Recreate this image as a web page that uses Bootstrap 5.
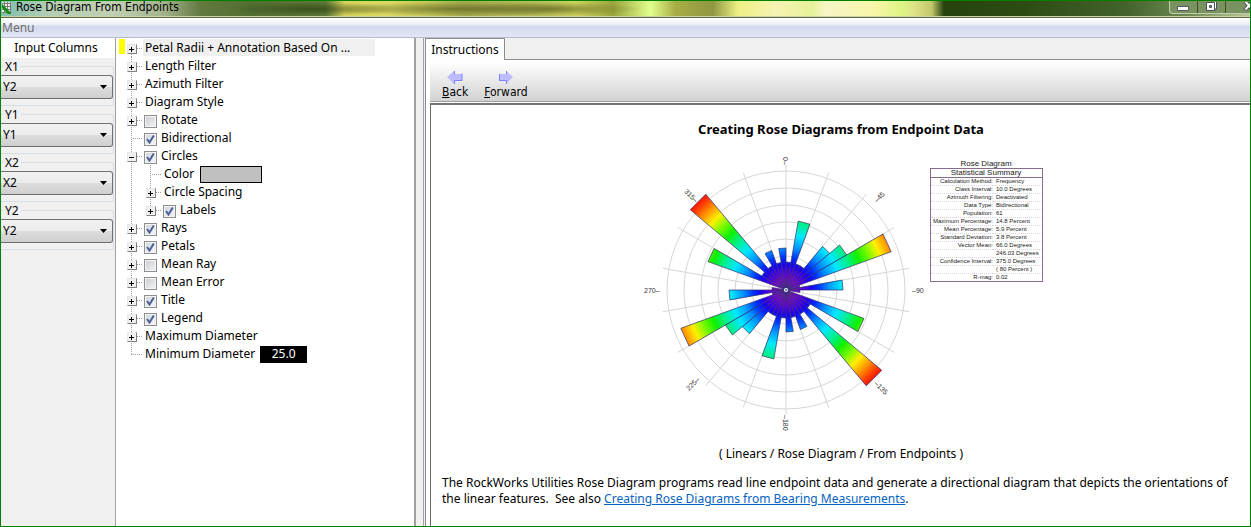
<!DOCTYPE html>
<html lang="en">
<head>
<meta charset="utf-8">
<meta name="viewport" content="width=device-width, initial-scale=1">
<title>Rose Diagram From Endpoints</title>
<link rel="stylesheet" href="https://cdn.jsdelivr.net/npm/bootstrap@5.3.0/dist/css/bootstrap.min.css">
<style>
  body { font-family: "Noto Sans", "DejaVu Sans Condensed", sans-serif; font-size: 12px; line-height: 16px; color: #000; background: #f0f0f0; }
  .app { border: 1px solid #008000; height: 100vh; }
  /* title bar */
  .titlebar { height: 17px; padding-left: 1px; border-bottom: 1px solid #5c6a45; box-shadow: inset 0 -1px 0 #c9d2a8;
    background:
      radial-gradient(closest-side, #5a601fb0, #5a601f00) 33% 60% / 260px 14px no-repeat,
      radial-gradient(closest-side, #5a601fa0, #5a601f00) 43% 60% / 180px 14px no-repeat,
      radial-gradient(closest-side, #22330c90, #22330c00) 21% 60% / 170px 14px no-repeat,
      linear-gradient(90deg, #7fbfae 0, #b5cdb4 4%, #c0cfb2 9%, #a3b48d 13%, #62793f 16%, #526f31 20%, #5d7a37 26%, #d6d25a 27.5%, #dcd963 31%, #c6c858 34%, #a5ab4c 37%, #b7bd58 43%, #cfd35e 46%, #9ba53c 49%, #e2ff8c 52%, #a7ad45 54%, #8f9742 57%, #eef084 59%, #f6f3b3 62%, #e6f29a 65%, #f7f5c6 66%, #f8f6a8 70%, #def587 72%, #dfe586 73%, #c3c76c 74.5%, #26430d 75.500%, #2d4c14 82%, #43632c 90%, #6d8a52 95%, #b9c795 100%); }
  .title-text { font-family: "DejaVu Sans Condensed", "DejaVu Sans", sans-serif; line-height: 13px; margin-left: 4px; }
  .winctl { height: 13px; border: 1px solid #c2cdb0; border-top: 0; border-right: 0; border-radius: 0 0 0 4px; background: #78935f; }
  .winctl button { border: 0; padding: 0; height: 12px; width: 28px; background: none; border-right: 1px solid #3c5128; line-height: 0; }
  .winctl .shut { width: 24px; border: 0; padding-left: 17px; }
  .winctl svg { display: block; margin: 0 auto; }
  .menubar { height: 20px; padding-left: 1px; line-height: 19px; border-bottom: 1px solid #b6bccc; background: linear-gradient(#fff 0, #e9eef7 7px, #d3daed 8px, #e1e6f5 100%); }
  .menubar a { color: #6d6d6d; text-decoration: none; }
  /* column pickers */
  .inputs { width: 115px; border-right: 1px solid #a0a0a0; }
  .inputs h2 { font-size: 12px; line-height: 16px; font-weight: 400; margin: 0; padding: 2px 4px 2px 0; background: #fff; text-align: center; }
  .inputs fieldset { border: 1px solid #d5dfe5; border-left: 0; border-radius: 0 3px 3px 0; padding: 0 0 6px; margin-right: 1px; }
  .inputs legend { float: none; width: auto; margin: 0 0 0 2px; padding: 0 2px; font-size: 12px; line-height: 17px; }
  .combo { display: block; width: 100%; height: 24px; padding: 0 0 0 2px; font: inherit; color: #000; appearance: none; border: 1px solid #707070; border-left: 0; border-radius: 0 3px 3px 0;
    background: url("data:image/svg+xml,%3Csvg xmlns='http://www.w3.org/2000/svg' width='7' height='4'%3E%3Cpath d='M0 0h7L3.5 4z'/%3E%3C/svg%3E") no-repeat right 5px center, linear-gradient(#f2f2f2 0, #ebebeb 50%, #dddddd 51%, #cfcfcf 100%); }
  /* option tree */
  .treepane { width: 300px; background: #fff; border-right: 2px solid #a0a0a0; }
  .tree { padding: 1px 0 0; }
  .treerow { height: 18px; padding-left: 11px; line-height: 18px; white-space: nowrap; }
  .treerow.marked { background: linear-gradient(#ff0, #ff0) 3px 0 / 6px 15px no-repeat; }
  .treerow.marked .caption-bar { background: #f0f0f0; width: 232px; margin-left: -2px; padding-left: 2px; height: 17px; }
  .twig { width: 18px; height: 18px; flex: none; line-height: 0;
    background: repeating-linear-gradient(#a0a0a0 0 1px, #fff 1px 2px) 4px 0 / 1px 100% no-repeat, repeating-linear-gradient(90deg, #a0a0a0 0 1px, #fff 1px 2px) 4px 9px / 11px 1px no-repeat; }
  .twig.first-twig { background-position: 4px 9px, 4px 9px; }
  .twig.last-twig { background-size: 1px 9px, 11px 1px; }
  .rail { width: 19px; height: 18px; flex: none; background: repeating-linear-gradient(#a0a0a0 0 1px, #fff 1px 2px) 4px 0 / 1px 100% no-repeat; }
  .knob { display: block; width: 10px; height: 10px; margin-top: 5px; padding: 0; border: 1px solid; border-color: #e8e8e8 #808080 #808080 #e8e8e8;
    background: linear-gradient(#000, #000) 1px 4px / 5px 1px no-repeat, linear-gradient(#000, #000) 3px 2px / 1px 5px no-repeat, #f0f0f0; }
  .knob.open { background: linear-gradient(#000, #000) 1px 4px / 5px 1px no-repeat, #f0f0f0; }
  .tick { appearance: none; width: 13px; height: 13px; flex: none; margin: 2px 4px 0 -1px; border: 1px solid #8e8f8f; box-shadow: inset 0 0 0 1px #f4f4f4; background: linear-gradient(135deg, #c9cdd2, #f4f4f4); }
  .tick:checked { background: url("data:image/svg+xml,%3Csvg xmlns='http://www.w3.org/2000/svg' width='11' height='11'%3E%3Cpath d='M2 5l2.5 3.5L8.800 1.500' fill='none' stroke='%234a5f97' stroke-width='2'/%3E%3C/svg%3E") center no-repeat, linear-gradient(135deg, #cfd5de, #f6f6f6); }
  .swatch { width: 62px; height: 17px; margin-left: 6px; padding: 0; border: 1px solid #000; background: #c0c0c0; }
  .value-box { width: 47px; height: 17px; margin-left: 5px; padding: 0; border: 0; background: #000; color: #fff; font: inherit; text-align: center; }
  /* help pane */
  .splitter { width: 8px; border-right: 1px solid #a0a0a0; }
  .helppane { min-width: 0; margin-left: 1px; }
  .tabstrip { height: 22px; }
  .tabstrip .tab-on { width: 80px; padding: 0; border: 1px solid #898c95; border-bottom: 0; background: #fff; line-height: 20px; color: #000; text-align: center; }
  .tabstrip .tab-fill { border-bottom: 1px solid #898c95; }
  .tabbody { background: #fff; border-left: 1px solid #898c95; padding: 2px 0 0 4px; min-height: 0; }
  .tools { height: 40px; padding: 4px 0 0 4px; border-bottom: 1px solid #a0a0a0; background: linear-gradient(#fff, #d2d2d2); }
  .tools button { border: 0; background: none; padding: 0 8px; color: #000; line-height: 14px; font-family: "DejaVu Sans Condensed", "DejaVu Sans", sans-serif; }
  .tools svg { display: block; margin: 2px auto 0; }
  .page { margin-top: 1px; border-left: 1px solid #696969; border-top: 2px solid #757575; padding: 16px 10px 0 11px; overflow: hidden; }
  .page h1 { font-size: 13px; line-height: 16px; font-weight: 700; margin: 0 0 17px; text-align: center; }
  .page p { margin: 0 0 13px; }
  .page .route { padding-top: 12px; }
  .page a { color: #0563c1; }
  .rose { width: 290px; height: 280px; flex: none; }
  .rose text { font: 7px "Liberation Sans", Arial, sans-serif; fill: #333; }
  .summary { width: 113px; margin-top: 6px; font: 6px/9px "Liberation Sans", Arial, sans-serif; color: #222; }
  .summary caption { caption-side: top; padding: 0; font-size: 8px; line-height: 8px; text-align: center; color: #222; }
  .summary table { width: 100%; border: 1px solid #8a6c90; border-collapse: collapse; }
  .summary thead th { font-size: 8px; line-height: 8px; font-weight: 400; text-align: center; border-bottom: 1px solid #8a6c90; padding: 0; }
  .summary td, .summary tbody th { padding: 0; height: 8px; line-height: 7px; font-weight: 400; white-space: nowrap; border-bottom: 1px dotted #ddd3df; }
  .summary tbody th { text-align: right; width: 63px; }
  .summary td { padding-left: 3px; }
</style>
</head>
<body>
<div class="app d-flex flex-column overflow-hidden">
  <header class="titlebar d-flex overflow-hidden flex-shrink-0">
    <svg width="10" height="13" viewBox="0 0 10 13" aria-hidden="true"><path d="M0 1h9v11H0z" fill="#eee"/><path d="M0 2.500h9M0 5.500h9M0 8.500h9M2.500 1v11M5.500 1v11M8.500 1v12M0 11.500h9" stroke="#777" fill="none"/><path d="M-1 4l9 9" stroke="#118a11" stroke-width="3"/></svg>
    <span class="title-text text-nowrap">Rose Diagram From Endpoints</span>
    <div class="winctl d-flex ms-auto overflow-hidden">
      <button type="button" aria-label="Minimize"><svg width="13" height="6" viewBox="0 0 13 6" class="mt-1"><path d="M.5.500h11v4H.5z" fill="#fff" stroke="#555a66"/></svg></button>
      <button type="button" aria-label="Restore"><svg width="12" height="11" viewBox="0 0 12 11"><path d="M2.500-1h8v8h-8z" fill="#fff" stroke="#4b5060"/><path d="M.5.500h8v8h-8z" fill="#fff" stroke="#4b5060"/><path d="M3.500 3.500h2v2h-2z" fill="#8a9a80" stroke="#4b5060"/></svg></button>
      <button type="button" aria-label="Close" class="shut"><svg width="12" height="10" viewBox="0 0 12 10"><path d="M2-1l8 9M10-1L2 8" stroke="#4b5060" stroke-width="4"/><path d="M2-1l7.500 8.500M10-1L2.500 7.500" stroke="#fff" stroke-width="2"/></svg></button>
    </div>
  </header>
  <nav class="menubar flex-shrink-0"><a href="#">Menu</a></nav>

  <main class="d-flex flex-grow-1 overflow-hidden">
    <section class="inputs flex-shrink-0">
      <h2>Input Columns</h2>
      <fieldset><legend><label for="x1">X1</label></legend><select id="x1" class="combo"><option>Y2</option></select></fieldset>
      <fieldset><legend><label for="y1">Y1</label></legend><select id="y1" class="combo"><option>Y1</option></select></fieldset>
      <fieldset><legend><label for="x2">X2</label></legend><select id="x2" class="combo"><option>X2</option></select></fieldset>
      <fieldset><legend><label for="y2">Y2</label></legend><select id="y2" class="combo"><option>Y2</option></select></fieldset>
    </section>

    <section class="treepane flex-shrink-0">
      <ul class="tree list-unstyled m-0">
        <li class="treerow marked d-flex"><span class="twig first-twig"><button type="button" class="knob" aria-label="Expand"></button></span><span class="caption-bar">Petal Radii + Annotation Based On ...</span></li>
        <li class="treerow d-flex"><span class="twig"><button type="button" class="knob" aria-label="Expand"></button></span>Length Filter</li>
        <li class="treerow d-flex"><span class="twig"><button type="button" class="knob" aria-label="Expand"></button></span>Azimuth Filter</li>
        <li class="treerow d-flex"><span class="twig"><button type="button" class="knob" aria-label="Expand"></button></span>Diagram Style</li>
        <li class="treerow d-flex align-items-center"><span class="twig"><button type="button" class="knob" aria-label="Expand"></button></span><input type="checkbox" class="tick" id="rotate"><label for="rotate">Rotate</label></li>
        <li class="treerow d-flex align-items-center"><span class="twig"></span><input type="checkbox" class="tick" id="bidi" checked><label for="bidi">Bidirectional</label></li>
        <li class="treerow d-flex align-items-center"><span class="twig"><button type="button" class="knob open" aria-label="Collapse"></button></span><input type="checkbox" class="tick" id="circles" checked><label for="circles">Circles</label></li>
        <li class="treerow d-flex align-items-center"><span class="rail"></span><span class="twig"></span><label for="color">Color</label><button type="button" class="swatch" id="color"></button></li>
        <li class="treerow d-flex"><span class="rail"></span><span class="twig"><button type="button" class="knob" aria-label="Expand"></button></span>Circle Spacing</li>
        <li class="treerow d-flex align-items-center"><span class="rail"></span><span class="twig last-twig"><button type="button" class="knob" aria-label="Expand"></button></span><input type="checkbox" class="tick" id="labels" checked><label for="labels">Labels</label></li>
        <li class="treerow d-flex align-items-center"><span class="twig"><button type="button" class="knob" aria-label="Expand"></button></span><input type="checkbox" class="tick" id="rays" checked><label for="rays">Rays</label></li>
        <li class="treerow d-flex align-items-center"><span class="twig"><button type="button" class="knob" aria-label="Expand"></button></span><input type="checkbox" class="tick" id="petals" checked><label for="petals">Petals</label></li>
        <li class="treerow d-flex align-items-center"><span class="twig"><button type="button" class="knob" aria-label="Expand"></button></span><input type="checkbox" class="tick" id="meanray"><label for="meanray">Mean Ray</label></li>
        <li class="treerow d-flex align-items-center"><span class="twig"><button type="button" class="knob" aria-label="Expand"></button></span><input type="checkbox" class="tick" id="meanerr"><label for="meanerr">Mean Error</label></li>
        <li class="treerow d-flex align-items-center"><span class="twig"><button type="button" class="knob" aria-label="Expand"></button></span><input type="checkbox" class="tick" id="titlebox" checked><label for="titlebox">Title</label></li>
        <li class="treerow d-flex align-items-center"><span class="twig"><button type="button" class="knob" aria-label="Expand"></button></span><input type="checkbox" class="tick" id="legend" checked><label for="legend">Legend</label></li>
        <li class="treerow d-flex"><span class="twig"><button type="button" class="knob" aria-label="Expand"></button></span>Maximum Diameter</li>
        <li class="treerow d-flex align-items-center"><span class="twig last-twig"></span><label for="mindia">Minimum Diameter</label><input type="text" class="value-box" id="mindia" value="25.0"></li>
      </ul>
    </section>

    <div class="splitter flex-shrink-0"></div>

    <section class="helppane flex-grow-1 d-flex flex-column">
      <div class="tabstrip d-flex flex-shrink-0" role="tablist">
        <button type="button" class="tab-on" role="tab" aria-selected="true">Instructions</button>
        <span class="tab-fill flex-grow-1"></span>
      </div>
      <div class="tabbody flex-grow-1 d-flex flex-column">
        <div class="tools d-flex flex-shrink-0">
          <button type="button"><svg width="16" height="15" viewBox="0 0 16 15"><path d="M0 7l7-6v3h8v7H7v3z" fill="#bcbcff"/><path d="M7.500 1v3.500M7.500 14v-3.500h7.500v-7" fill="none" stroke="#8080ff"/></svg><u>B</u>ack</button>
          <button type="button"><svg width="16" height="15" viewBox="0 0 16 15"><path d="M15 7L8 1v3H1v7h7v3z" fill="#bcbcff"/><path d="M8.500 1v3M1.500 4v6.500h7V14" fill="none" stroke="#8080ff"/></svg><u>F</u>orward</button>
        </div>
        <article class="page flex-grow-1">
          <h1>Creating Rose Diagrams from Endpoint Data</h1>
          <div class="d-flex justify-content-center">
            <svg class="rose" viewBox="-146 -136 290 280" role="img" aria-label="Rose diagram">
              <defs>
                <radialGradient id="heat" gradientUnits="userSpaceOnUse" cx="0" cy="0" r="125">
                  <stop offset="0" stop-color="#a000e0"/><stop offset=".1" stop-color="#7800d8"/><stop offset=".2" stop-color="#1c00f0"/><stop offset=".26" stop-color="#0030ff"/><stop offset=".34" stop-color="#0090ff"/><stop offset=".44" stop-color="#00e8ff"/><stop offset=".54" stop-color="#00f08c"/><stop offset=".63" stop-color="#10f000"/><stop offset=".72" stop-color="#80fa00"/><stop offset=".8" stop-color="#fff000"/><stop offset=".88" stop-color="#ff9800"/><stop offset=".96" stop-color="#ff3800"/><stop offset="1" stop-color="#ff1800"/>
                </radialGradient>
              </defs>
              <g id="grid" fill="none" stroke="#d6d6d6"></g>
              <g id="petalset" fill="url(#heat)" stroke="#30306c" stroke-width=".7"></g>
              <circle r="2" fill="#fff"/><circle r="1" fill="#36a"/>
              <text transform="translate(-3 -133) rotate(90)">0–</text>
              <text transform="translate(91 -87) rotate(-45)">–45</text>
              <text x="126" y="3">–90</text>
              <text transform="translate(88 94) rotate(45)">–135</text>
              <text transform="translate(-3 125) rotate(90)">–180</text>
              <text transform="translate(-97 101) rotate(-45)">225–</text>
              <text x="-142" y="3">270–</text>
              <text transform="translate(-102 -98) rotate(45)">315–</text>
            </svg>
            <div class="summary">
              <table>
                <caption>Rose Diagram</caption>
                <thead><tr><th colspan="2">Statistical Summary</th></tr></thead>
                <tbody>
                  <tr><th>Calculation Method:</th><td>Frequency</td></tr>
                  <tr><th>Class Interval:</th><td>10.0 Degrees</td></tr>
                  <tr><th>Azimuth Filtering:</th><td>Deactivated</td></tr>
                  <tr><th>Data Type:</th><td>Bidirectional</td></tr>
                  <tr><th>Population:</th><td>61</td></tr>
                  <tr><th>Maximum Percentage:</th><td>14.8 Percent</td></tr>
                  <tr><th>Mean Percentage:</th><td>5.9 Percent</td></tr>
                  <tr><th>Standard Deviation:</th><td>3.8 Percent</td></tr>
                  <tr><th>Vector Mean:</th><td>66.0 Degrees</td></tr>
                  <tr><th></th><td>246.03 Degrees</td></tr>
                  <tr><th>Confidence Interval:</th><td>375.0 Degrees</td></tr>
                  <tr><th></th><td>( 80 Percent )</td></tr>
                  <tr><th>R-mag:</th><td>0.02</td></tr>
                </tbody>
              </table>
            </div>
          </div>
          <p class="route text-center">( Linears / Rose Diagram / From Endpoints )</p>
          <p>The RockWorks Utilities Rose Diagram programs read line endpoint data and generate a directional diagram that depicts the orientations of the linear features.&nbsp; See also <a href="#">Creating Rose Diagrams from Bearing Measurements</a>.</p>
        </article>
      </div>
    </section>
  </main>
</div>
<script src="https://cdn.jsdelivr.net/npm/bootstrap@5.3.0/dist/js/bootstrap.bundle.min.js"></script>
<script>
  // Petal radius for each 10 degree class from north to south; the other half repeats it.
  const radii = [28, 70, 28, 28, 57, 70, 112, 14, 57, 14, 0, 83, 28, 125, 28, 42, 28, 42];
  const point = (deg, r) => {
    const a = deg * Math.PI / 180;
    return (r * Math.sin(a)).toFixed(1) + ',' + (-r * Math.cos(a)).toFixed(1);
  };
  let grid = '', petals = '';
  for (let r = 17; r <= 119; r += 17) grid += `<circle r="${r}"/>`;
  for (let a = 0; a < 360; a += 20) grid += `<path d="M0,0L${point(a, 125)}"/>`;
  radii.concat(radii).forEach((r, i) => {
    if (r) petals += `<path d="M0,0L${point(i * 10, r)}L${point(i * 10 + 10, r)}Z"/>`;
  });
  document.getElementById('grid').innerHTML = grid;
  document.getElementById('petalset').innerHTML = petals;
</script>
</body>
</html>
